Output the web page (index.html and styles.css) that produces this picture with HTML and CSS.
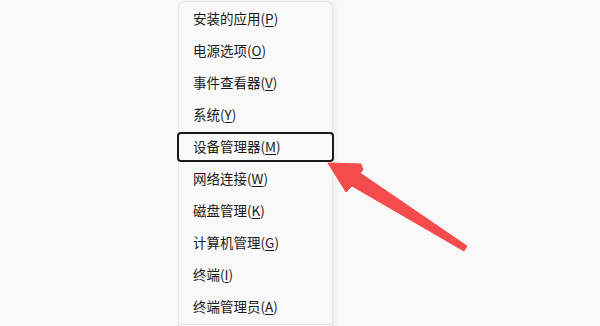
FILE: index.html
```html
<!DOCTYPE html>
<html lang="zh-CN">
<head>
<meta charset="utf-8">
<link rel="stylesheet" href="styles.css">
</head>
<body>
<div class="page">
  <ul class="menu">
    <li class="item">安装的应用(<u>P</u>)</li>
    <li class="item">电源选项(<u>O</u>)</li>
    <li class="item">事件查看器(<u>V</u>)</li>
    <li class="item">系统(<u>Y</u>)</li>
    <li class="item focus">设备管理器(<u>M</u>)</li>
    <li class="item">网络连接(<u>W</u>)</li>
    <li class="item">磁盘管理(<u>K</u>)</li>
    <li class="item">计算机管理(<u>G</u>)</li>
    <li class="item">终端(<u>I</u>)</li>
    <li class="item">终端管理员(<u>A</u>)</li>
    <li class="sep"></li>
  </ul>
  <svg class="arrow" width="600" height="326" viewBox="0 0 600 326">
    <polygon points="328,163 361,164 363,170 360,173 467,246 464,251 352,186 346,192" fill="#f44c4c" stroke="#f44c4c" stroke-width="1" stroke-linejoin="round"/>
  </svg>
</div>
</body>
</html>
```
FILE: styles.css
```css
html, body {
  margin: 0;
  padding: 0;
  background: #f9f9f9;
}
.page {
  position: relative;
  width: 600px;
  height: 326px;
  overflow: hidden;
  font-family: "Noto Sans CJK SC", "Noto Sans", sans-serif;
}
.menu {
  position: absolute;
  left: 178px;
  top: 1px;
  width: 153px;
  margin: 0;
  padding: 2px 0 0;
  list-style: none;
  background: #f9f9f9;
  border: 1px solid #e6e6e6;
  border-radius: 7px;
  box-shadow: 2px 0 5px rgba(0,0,0,0.06);
  display: flex;
  flex-direction: column;
  gap: 2px;
  height: 340px;
}
.item {
  height: 30px;
  line-height: 28px;
  padding-left: 14px;
  font-size: 13.5px;
  color: #1b1b1b;
  box-sizing: border-box;
  white-space: nowrap;
}
.item u {
  text-decoration: underline;
  text-underline-offset: 2px;
}
.item.focus {
  margin: 0 -2px;
  padding-left: 14px;
  border: 2px solid #1c1c1c;
  border-radius: 4px;
  line-height: 24px;
}
.sep {
  height: 1px;
  background: #e2e2e2;
  margin: 0 0;
}
.arrow {
  position: absolute;
  left: 0;
  top: 0;
}
```
